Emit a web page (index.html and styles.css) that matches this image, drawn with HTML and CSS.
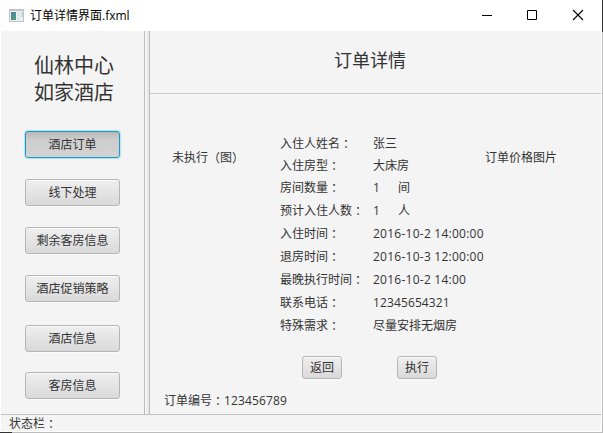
FILE: index.html
```
<!DOCTYPE html>
<html lang="zh-CN">
<head>
<meta charset="utf-8">
<title>订单详情界面.fxml</title>
<link rel="stylesheet" href="styles.css">
</head>
<body>
<div class="window">
  <header class="titlebar">
    <svg class="app-icon" width="15" height="13" viewBox="0 0 15 13" shape-rendering="crispEdges">
      <defs><linearGradient id="pane" x1="0" y1="0" x2="1" y2="1"><stop offset="0" stop-color="#4e7fae"/><stop offset="1" stop-color="#4fa070"/></linearGradient></defs>
      <rect width="15" height="13" fill="#bfc3c8"/>
      <rect x="1" y="2" width="13" height="10" fill="#eef0f3"/>
      <rect x="2" y="3" width="5" height="8" fill="url(#pane)"/>
      <rect x="8" y="3" width="3" height="8" fill="#e2e5ea"/>
      <rect x="12" y="3" width="2" height="5" fill="#c4dccf"/>
    </svg>
    <span class="title">订单详情界面.fxml</span>
    <svg class="controls" width="102" height="12" viewBox="0 0 102 12" fill="none" stroke="#000">
      <path d="M0 6.500h10M45.500 1.500h9v9h-9z"/>
      <path d="M91 1l10 10M101 1l-10 10" stroke-width="1.100"/>
    </svg>
  </header>
  <main class="content">
    <nav class="sidebar">
      <h1 class="brand">仙林中心<br>如家酒店</h1>
      <button class="btn active">酒店订单</button>
      <button class="btn">线下处理</button>
      <button class="btn">剩余客房信息</button>
      <button class="btn">酒店促销策略</button>
      <button class="btn lower">酒店信息</button>
      <button class="btn last">客房信息</button>
    </nav>
    <div class="divider"></div>
    <section class="detail">
      <h2 class="heading">订单详情</h2>
      <div class="order">
        <div class="state">未执行<i lang="zh-TW">（</i>图<i lang="zh-TW">）</i></div>
        <dl class="fields">
          <dt>入住人姓名<i lang="zh-TW">：</i></dt><dd>张三</dd>
          <dt>入住房型<i lang="zh-TW">：</i></dt><dd>大床房</dd>
          <dt>房间数量<i lang="zh-TW">：</i></dt><dd><span class="count">1</span>间</dd>
          <dt>预计入住人数<i lang="zh-TW">：</i></dt><dd><span class="count">1</span>人</dd>
          <dt>入住时间<i lang="zh-TW">：</i></dt><dd class="date">2016-10-2 14:00:00</dd>
          <dt>退房时间<i lang="zh-TW">：</i></dt><dd class="date">2016-10-3 12:00:00</dd>
          <dt>最晚执行时间<i lang="zh-TW">：</i></dt><dd class="date">2016-10-2 14:00</dd>
          <dt>联系电话<i lang="zh-TW">：</i></dt><dd class="digits">12345654321</dd>
          <dt>特殊需求<i lang="zh-TW">：</i></dt><dd>尽量安排无烟房</dd>
        </dl>
        <div class="price">订单价格图片</div>
      </div>
      <div class="actions">
        <button class="btn small">返回</button>
        <button class="btn small">执行</button>
      </div>
      <div class="number">订单编号<i lang="zh-TW">：</i><span class="digits">123456789</span></div>
    </section>
  </main>
  <footer class="status">状态栏<i lang="zh-TW">：</i></footer>
  <div class="bottom-edge"></div>
</div>
</body>
</html>
```
FILE: styles.css
```
* { box-sizing: border-box; }

body {
  margin: 0;
  overflow: hidden;
  background: #fff;
  color: #333;
  font: 12px/16px "Open Sans", "Noto Sans CJK SC", sans-serif;
}

i {
  position: relative;
  top: 1px;
  font-family: "Noto Sans CJK TC", sans-serif;
  font-style: normal;
  line-height: 1;
}

.window {
  display: flex;
  flex-direction: column;
  width: 603px;
  height: 433px;
  border-right: 1px solid;
  border-image: linear-gradient(#333 33px, #bbb 33px) 1;
}

.titlebar {
  display: flex;
  align-items: center;
  height: 31px;
  padding: 0 18px 0 9px;
  color: #000;
}

.title { margin-left: 6px; flex: 1; }

.controls { margin-top: -1px; }

.content {
  display: flex;
  height: 383px;
  margin: 0 1px;
  background: #f4f4f4;
}

.sidebar {
  display: flex;
  flex-direction: column;
  width: 143px;
  padding: 21px 0 0 24px;
}

.brand {
  height: 79px;
  margin: 0;
  padding-left: 9px;
  font-size: 20px;
  font-weight: 400;
  line-height: 27px;
}

.btn {
  width: 95px;
  height: 27px;
  flex: none;
  margin: 0 0 21px;
  padding: 0;
  border: 1px solid #b5b5b5;
  border-radius: 3px;
  background: linear-gradient(#efefef, #d9d9d9);
  box-shadow: inset 0 1px #fafafa, 0 1px #fafafa;
  color: #333;
  font: inherit;
}

.active {
  border-color: #1a9bc7;
  background: linear-gradient(#b8b8b8, #cecece 8px, #d2d2d2);
  box-shadow: 0 0 1px 1px #b5e0ef;
}

.lower { margin: 2px 0 20px; }
.last { margin: 0; }

.divider {
  width: 6px;
  border: solid #bdbdbd;
  border-width: 0 1px;
  background: linear-gradient(90deg, #fafafa, #e2e2e2);
}

.detail { flex: 1; }

.heading {
  height: 63px;
  margin: 0;
  padding: 16px 0 0 184px;
  border-bottom: 1px solid #c8c8c8;
  box-shadow: 0 1px #fafafa;
  font-size: 18px;
  font-weight: 400;
  line-height: 26px;
}

.order {
  display: grid;
  grid-template-columns: 108px 205px auto;
  height: 262px;
  padding: 39px 0 0 22px;
}

.state, .price { padding-top: 17px; }

.fields {
  display: grid;
  grid-template-columns: 93px auto;
  grid-template-rows: repeat(3, 22px) repeat(6, 23px);
  align-content: start;
  align-items: center;
  margin: 0;
  white-space: nowrap;
}

.fields dd { margin: 0; }

.date { letter-spacing: 0.25px; }
.digits { letter-spacing: 0.12px; }

.count { display: inline-block; width: 25px; }

.actions { display: flex; gap: 55px; padding-left: 152px; }

.small { width: 40px; height: 23px; margin: 0; }

.number { padding: 14px 0 0 14px; }

.status {
  height: 17px;
  margin: 0 1px;
  padding-left: 8px;
  border-top: 1px solid #c0c0c0;
  background: #f4f4f4;
  line-height: 18px;
}

.bottom-edge {
  height: 1px;
  margin-top: 1px;
  background: linear-gradient(90deg, #333 12px, #bbb 12px);
}
```
